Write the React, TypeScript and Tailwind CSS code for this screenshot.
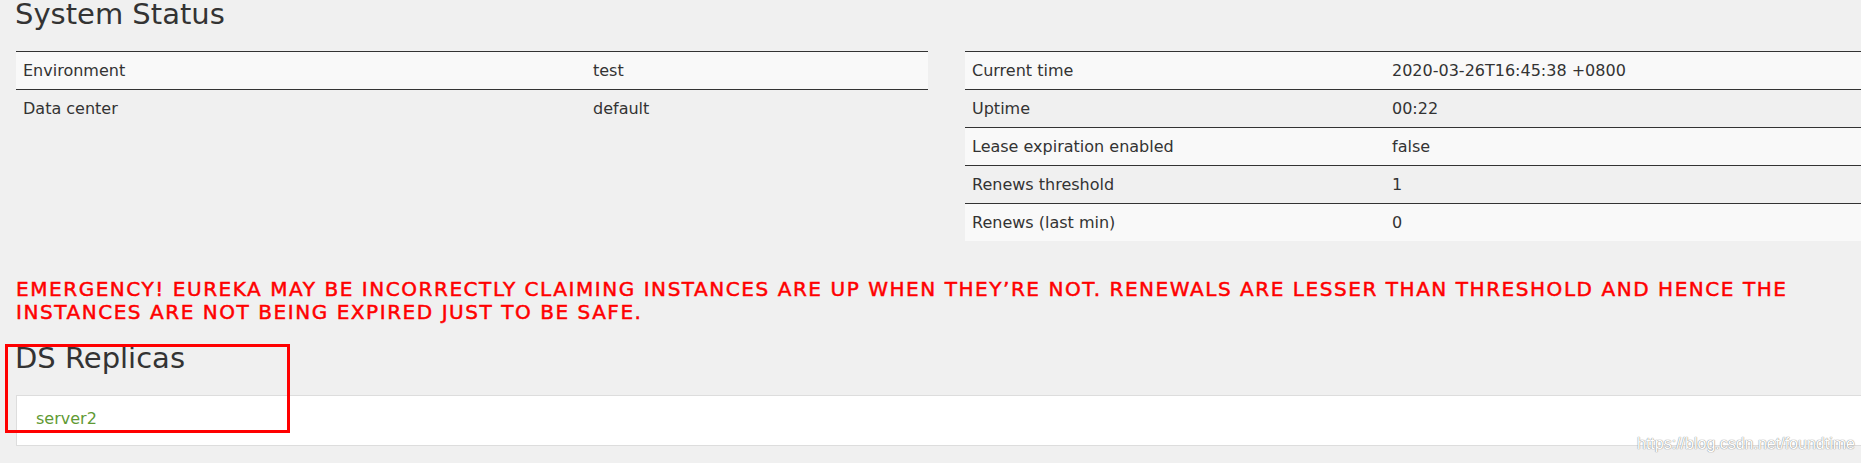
import React from "react";

const leftRows: [string, string][] = [
  ["Environment", "test"],
  ["Data center", "default"],
];

const rightRows: [string, string][] = [
  ["Current time", "2020-03-26T16:45:38 +0800"],
  ["Uptime", "00:22"],
  ["Lease expiration enabled", "false"],
  ["Renews threshold", "1"],
  ["Renews (last min)", "0"],
];

function InfoTable({ rows, labelWidth }: { rows: [string, string][]; labelWidth: string }) {
  return (
    <div className="flex flex-col">
      {rows.map(([k, v], i) => (
        <div
          key={k}
          className={
            "flex h-[38px] items-center border-t border-[#333333] " +
            (i % 2 === 0 ? "bg-[#f9f9f9]" : "bg-[#f0f0f0]")
          }
        >
          <div className={labelWidth + " pl-[7px]"}>{k}</div>
          <div className="pl-[8px]">{v}</div>
        </div>
      ))}
    </div>
  );
}

export default function App() {
  return (
    <div className="relative h-[463px] w-[1861px] overflow-hidden bg-[#f0f0f0] text-[#333333] font-['DejaVu_Sans',sans-serif]">
      <div className="w-[1894px] pl-[16px]">
        <h1 className="mt-[-4px] ml-[-1px] text-[29px] leading-[36px] font-normal">System Status</h1>
        <div className="mt-[19px] grid grid-cols-[912px_912px] gap-x-[37px] text-[16px] leading-[20px]">
          <InfoTable rows={leftRows} labelWidth="w-[569px]" />
          <InfoTable rows={rightRows} labelWidth="w-[419px]" />
        </div>
        <div className="mt-[37px] text-[20px] leading-[23px] font-normal tracking-[1.55px] text-[#ff0000] uppercase [-webkit-text-stroke:0.5px_#ff0000]">
          EMERGENCY! EUREKA MAY BE INCORRECTLY CLAIMING INSTANCES ARE UP WHEN THEY’RE NOT. RENEWALS ARE LESSER THAN THRESHOLD AND HENCE THE
          <br />
          INSTANCES ARE NOT BEING EXPIRED JUST TO BE SAFE.
        </div>
        <h1 className="mt-[16px] ml-[-1px] text-[29px] leading-[36px] font-normal">DS Replicas</h1>
        <div className="mt-[19px] h-[51px] border border-[#dddddd] bg-white pl-[19px] pt-[13px] text-[16px] leading-[20px]">
          <span className="text-[#5f9a34]">server2</span>
        </div>
      </div>

      <div className="absolute left-[5px] top-[344px] h-[89px] w-[285px] border-[3px] border-[#ff0000]" />

      <div className="absolute left-[1637px] top-[435px] text-[16px] leading-[18px] text-white font-['Liberation_Sans',sans-serif] [text-shadow:0_0_1px_#8a8a8a,0_0_1px_#8a8a8a]">
        https://blog.csdn.net/foundtime
      </div>
    </div>
  );
}
